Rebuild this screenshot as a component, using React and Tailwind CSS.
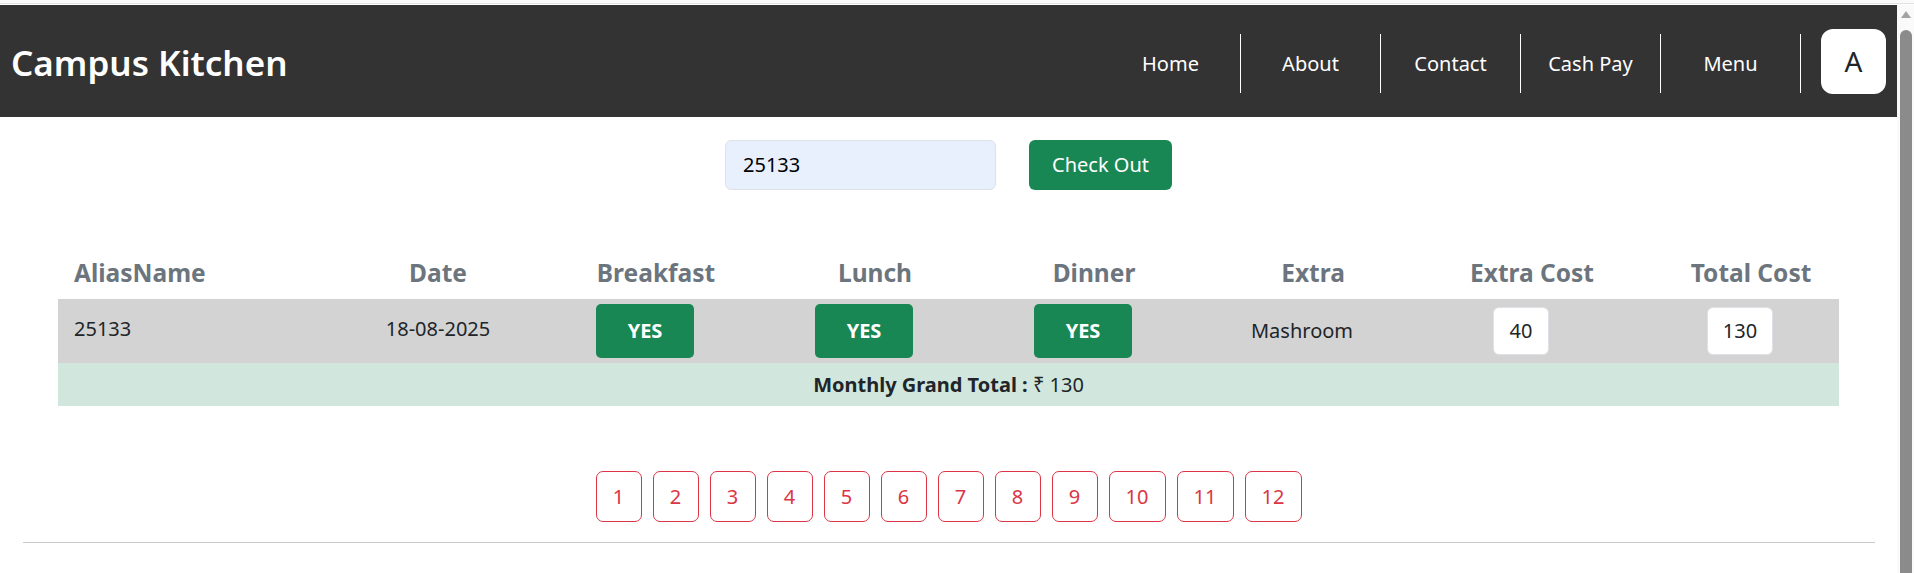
import React from "react";

const navItems = ["Home", "About", "Contact", "Cash Pay", "Menu"];
const pages = ["1", "2", "3", "4", "5", "6", "7", "8", "9", "10", "11", "12"];

function YesBtn() {
  return (
    <div className="w-[98px] h-[54px] rounded-[5px] bg-[#198754] text-white font-bold text-[20px] flex items-center justify-center">
      YES
    </div>
  );
}

export default function App() {
  return (
    <div className="w-[1914px] h-[573px] overflow-hidden bg-white font-['Noto_Sans',sans-serif] text-[#212529] flex flex-col">
      <div className="h-[3px] bg-[#fafafa]" />
      <div className="h-[1px] bg-[#e2e2e2]" />
      <div className="h-[1px] bg-white" />
      <div className="flex flex-1 min-h-0">
        <main className="flex-1 flex flex-col">
          <header className="h-[112px] bg-[#333333] flex items-center justify-between pl-[11px] pr-[11px]">
            <h1 className="text-white text-[35px] font-semibold leading-none mt-[3px]">Campus Kitchen</h1>
            <nav className="flex items-center">
              {navItems.map((n) => (
                <a
                  key={n}
                  className="mt-[4px] w-[140px] h-[59px] border-r border-white flex items-center justify-center pt-[2px] text-white text-[20px]"
                >
                  {n}
                </a>
              ))}
              <div className="ml-[20px] w-[65px] h-[65px] rounded-[12px] bg-white flex items-center justify-center text-[28px] text-[#212529]">
                A
              </div>
            </nav>
          </header>

          <div className="mt-[23px] flex justify-center gap-[33px]">
            <div className="w-[271px] h-[50px] rounded-[6px] border border-[#dee2e6] bg-[#e8f0fe] flex items-center pl-[17px] text-[20px] text-black">
              25133
            </div>
            <button className="w-[143px] h-[50px] rounded-[6px] bg-[#198754] text-white text-[20px] flex items-center justify-center">
              Check Out
            </button>
          </div>

          <div className="mt-[58px] w-[1781px] mx-auto">
            <div className="grid grid-cols-[272px_174px_repeat(6,198px)] gap-x-[21px] h-[51px] items-center text-[24.5px] font-bold text-[#6c757d]">
              <div className="pl-[16px]">AliasName</div>
              <div className="text-center">Date</div>
              <div className="text-center pl-[22px]">Breakfast</div>
              <div className="text-center pl-[22px]">Lunch</div>
              <div className="text-center pl-[22px]">Dinner</div>
              <div className="text-center pl-[22px]">Extra</div>
              <div className="text-center pl-[22px]">Extra Cost</div>
              <div className="text-center pl-[22px]">Total Cost</div>
            </div>
            <div className="grid grid-cols-[272px_174px_repeat(6,198px)] gap-x-[21px] h-[64px] items-center bg-[#d3d3d3] text-[20px]">
              <div className="pl-[16px] -mt-[5px]">25133</div>
              <div className="text-center -mt-[5px]">18-08-2025</div>
              <div className="flex justify-center"><YesBtn /></div>
              <div className="flex justify-center"><YesBtn /></div>
              <div className="flex justify-center"><YesBtn /></div>
              <div className="text-center">Mashroom</div>
              <div className="flex justify-center">
                <div className="w-[56px] h-[48px] rounded-[6px] bg-white border border-[#dee2e6] flex items-center justify-center">40</div>
              </div>
              <div className="flex justify-center">
                <div className="w-[66px] h-[48px] rounded-[6px] bg-white border border-[#dee2e6] flex items-center justify-center">130</div>
              </div>
            </div>
            <div className="h-[43px] bg-[#d1e7dd] flex items-center justify-center text-[20px]">
              <span className="font-bold">Monthly Grand Total :</span>
              <span>&nbsp;₹ 130</span>
            </div>
          </div>

          <div className="mt-[65px] flex justify-center gap-[11px]">
            {pages.map((p) => (
              <button
                key={p}
                className={`${p.length > 1 ? "w-[57px]" : "w-[46px]"} h-[51px] rounded-[7px] border border-[#dc3545] text-[#dc3545] text-[20px] flex items-center justify-center`}
              >
                {p}
              </button>
            ))}
          </div>

          <div className="mt-[20px] mx-auto w-[1852px] h-[1px] bg-[#c8c9ca]" />
        </main>

        <aside className="w-[17px] bg-[#fafafa] flex flex-col items-center">
          <svg width="10" height="7" viewBox="0 0 10 7" className="mt-[6px]">
            <polygon points="5,0 10,7 0,7" fill="#a3a3a3" />
          </svg>
          <div className="mt-[12px] w-[12px] flex-1 rounded-t-full bg-[#8b8b8b]" />
        </aside>
      </div>
    </div>
  );
}
